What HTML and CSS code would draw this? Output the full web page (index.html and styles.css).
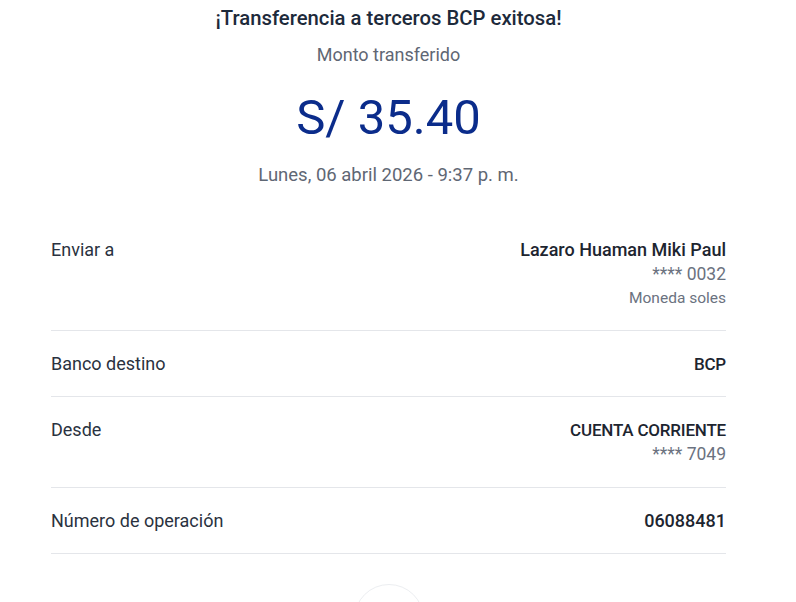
FILE: index.html
```html
<!DOCTYPE html>
<html lang="es">
<head>
<meta charset="utf-8">
<link rel="stylesheet" href="styles.css">
</head>
<body>
<main class="page">
  <header class="hero">
    <h1 class="title">¡Transferencia a terceros BCP exitosa!</h1>
    <p class="subtitle">Monto transferido</p>
    <p class="amount">S/ 35.40</p>
    <p class="date">Lunes, 06 abril 2026 - 9:37 p. m.</p>
  </header>
  <section class="details">
    <div class="row">
      <span class="label">Enviar a</span>
      <div class="value">
        <span class="strong">Lazaro Huaman Miki Paul</span>
        <span class="muted">**** 0032</span>
        <span class="small">Moneda soles</span>
      </div>
    </div>
    <div class="row">
      <span class="label">Banco destino</span>
      <div class="value"><span class="strong caps">BCP</span></div>
    </div>
    <div class="row">
      <span class="label">Desde</span>
      <div class="value">
        <span class="strong caps">CUENTA CORRIENTE</span>
        <span class="muted">**** 7049</span>
      </div>
    </div>
    <div class="row">
      <span class="label">Número de operación</span>
      <div class="value"><span class="strong">06088481</span></div>
    </div>
  </section>
  <div class="share"><span class="circle"></span></div>
</main>
</body>
</html>
```
FILE: styles.css
```css
* { box-sizing: border-box; }
html, body { margin: 0; padding: 0; background: #fff; }
body { font-family: "Roboto", "Noto Sans", sans-serif; overflow: hidden; height: 602px; }
.page { width: 675px; margin-left: 51px; }
.hero { display: flex; flex-direction: column; align-items: center; }
.title { margin: 5px 0 0; font-size: 20.3px; line-height: 26px; font-weight: 500; color: #1d2a3b; }
.subtitle { margin: 12px 0 0; font-size: 18px; line-height: 24px; color: #5f6774; }
.amount { margin: 21px 0 0; font-size: 49px; line-height: 60px; color: #0b2c8b; }
.date { margin: 15px 0 0; font-size: 18.5px; line-height: 24px; color: #5f6774; }
.details { margin-top: 30px; }
.row { display: flex; justify-content: space-between; align-items: flex-start; padding: 21px 0 20px; border-bottom: 1px solid #e4e6ea; }
.label { font-size: 18px; line-height: 24px; color: #2a3240; }
.value { display: flex; flex-direction: column; align-items: flex-end; text-align: right; }
.strong { font-size: 18px; line-height: 24px; font-weight: 500; color: #1d2530; }
.caps { font-size: 17px; letter-spacing: -0.2px; }
.muted { font-size: 17.5px; line-height: 25px; color: #6b7280; }
.small { font-size: 15.5px; line-height: 23px; color: #6b7280; }
.share { display: flex; justify-content: center; margin-top: 30px; }
.circle { width: 70px; height: 70px; border-radius: 50%; border: 1px solid #eceef1; }
```
